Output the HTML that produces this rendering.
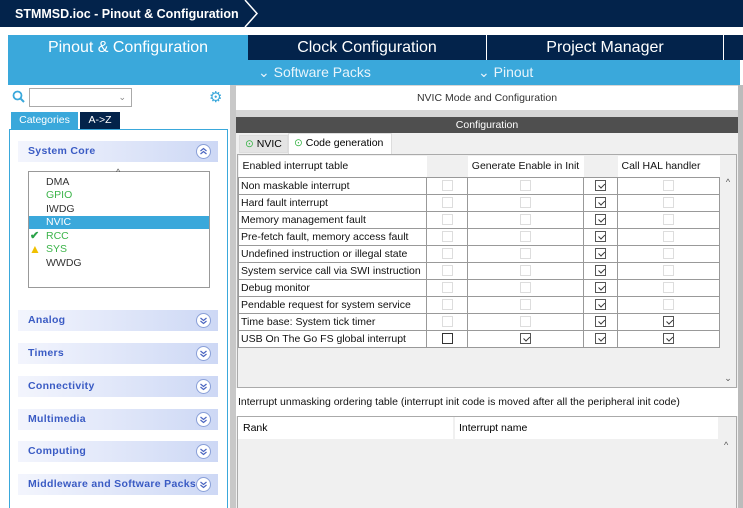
<!DOCTYPE html><html><head><style>
*{margin:0;padding:0;box-sizing:border-box}
body{width:743px;height:508px;overflow:hidden;background:#fff;font-family:"Liberation Sans",sans-serif;position:relative}
.a{position:absolute}
.top{left:0;top:0;width:743px;height:27px;background:#03234b;color:#fff;font-weight:bold;font-size:12.5px}
.tab{top:35px;height:25px;color:#fff;font-size:16px;text-align:center;line-height:25px}
.cat{left:18px;width:200px;height:21px;background:linear-gradient(90deg,#f3f5fd,#cdd8f5);color:#3a5bc4;font-weight:bold;font-size:10.5px;line-height:21px;padding-left:10px;letter-spacing:.3px}
.cat svg{position:absolute;right:7px;top:3px}
.li{left:46px;font-size:10.5px;color:#333}
table{border-collapse:collapse;font-size:10.5px;color:#111}
td{border:1px solid #999;height:17px;padding:0 2px;white-space:nowrap}
.cb{display:inline-block;width:11px;height:11px;border:1px solid #ddd;vertical-align:middle}
.ck{border-color:#555;position:relative}
.ck:after{content:"";position:absolute;left:2px;top:0px;width:5px;height:3px;border-left:1px solid #333;border-bottom:1px solid #333;transform:rotate(-45deg) translate(-1px,2px)}
.dk{border-color:#333}
td.c{text-align:center}
</style></head><body>
<svg width="0" height="0" style="position:absolute"><defs>
<g id="dn"><circle cx="7.5" cy="7.5" r="7" fill="#fff" stroke="#8aa0d8"/><path d="M4.5 5 L7.5 7.5 L10.5 5 M4.5 8 L7.5 10.5 L10.5 8" stroke="#4a65c0" stroke-width="1.2" fill="none"/></g>
<g id="up"><circle cx="7.5" cy="7.5" r="7" fill="#fff" stroke="#8aa0d8"/><path d="M4.5 7 L7.5 4.5 L10.5 7 M4.5 10 L7.5 7.5 L10.5 10" stroke="#4a65c0" stroke-width="1.2" fill="none"/></g>
</defs></svg>
<div class="a top"><span class="a" style="left:15px;top:7px">STMMSD.ioc - Pinout &amp; Configuration</span>
<svg class="a" style="left:244px;top:0" width="16" height="27"><path d="M1 0 L13 13.5 L1 27" stroke="#fff" stroke-width="1.5" fill="none"/></svg></div>
<div class="a tab" style="left:8px;width:240px;background:#3aa8db">Pinout &amp; Configuration</div>
<div class="a tab" style="left:248px;width:238px;background:#03234b">Clock Configuration</div>
<div class="a tab" style="left:487px;width:236px;background:#03234b">Project Manager</div>
<div class="a tab" style="left:724px;width:19px;background:#03234b"></div>
<div class="a" style="left:8px;top:60px;width:732px;height:25px;background:#3aa8db;color:#e8f4fb;font-size:14px;line-height:25px"><span class="a" style="left:250px">⌄ Software Packs</span><span class="a" style="left:470px">⌄ Pinout</span></div>
<!-- left -->
<svg class="a" style="left:12px;top:90px" width="14" height="14"><circle cx="5.5" cy="5.5" r="4" stroke="#3aa8db" stroke-width="1.8" fill="none"/><path d="M8.5 8.5 L12 12" stroke="#3aa8db" stroke-width="2"/></svg>
<div class="a" style="left:29px;top:88px;width:103px;height:19px;border:1px solid #aaa;font-size:9px;color:#888;text-align:right;padding-right:5px;line-height:17px">⌄</div>
<div class="a" style="left:209px;top:88px;color:#3aa8db;font-size:15px">⚙</div>
<div class="a" style="left:11px;top:112px;width:67px;height:17px;background:#3aa8db;color:#fff;font-size:10.5px;text-align:center;line-height:17px">Categories</div>
<div class="a" style="left:80px;top:112px;width:40px;height:17px;background:#03234b;color:#fff;font-size:10.5px;text-align:center;line-height:17px">A-&gt;Z</div>
<div class="a" style="left:9px;top:129px;width:219px;height:379px;border:1px solid #3aa8db;border-bottom:none"></div>
<div class="a cat" style="top:141px">System Core<svg width="15" height="15"><use href="#up"/></svg></div>
<div class="a" style="left:28px;top:171px;width:182px;height:117px;border:1px solid #999"></div>
<div class="a" style="left:116px;top:167px;font-size:9px;color:#555">^</div>
<div class="a li" style="top:176px">DMA</div>
<div class="a li" style="top:189px;color:#3cb44a">GPIO</div>
<div class="a li" style="top:203px">IWDG</div>
<div class="a" style="left:29px;top:216px;width:180px;height:13px;background:#3aa8db"></div>
<div class="a li" style="top:216px;color:#fff">NVIC</div>
<div class="a" style="left:30px;top:229px;color:#2ca34a;font-size:11px;font-weight:bold">✔</div>
<div class="a li" style="top:230px;color:#3cb44a">RCC</div>
<div class="a" style="left:29px;top:242px;color:#f0c000;font-size:12px">▲</div>
<div class="a li" style="top:243px;color:#3cb44a">SYS</div>
<div class="a li" style="top:257px">WWDG</div>
<div class="a cat" style="top:310px">Analog<svg width="15" height="15"><use href="#dn"/></svg></div>
<div class="a cat" style="top:343px">Timers<svg width="15" height="15"><use href="#dn"/></svg></div>
<div class="a cat" style="top:376px">Connectivity<svg width="15" height="15"><use href="#dn"/></svg></div>
<div class="a cat" style="top:409px">Multimedia<svg width="15" height="15"><use href="#dn"/></svg></div>
<div class="a cat" style="top:441px">Computing<svg width="15" height="15"><use href="#dn"/></svg></div>
<div class="a cat" style="top:474px">Middleware and Software Packs<svg width="15" height="15"><use href="#dn"/></svg></div>
<!-- splitter -->
<div class="a" style="left:230px;top:85px;width:6px;height:423px;background:#c8c8c8"></div>
<!-- right -->
<div class="a" style="left:236px;top:85px;width:507px;height:423px;background:#d6d6d6"></div>
<div class="a" style="left:236px;top:86px;width:502px;height:24px;background:#fff;font-size:10.5px;color:#333;text-align:center;line-height:24px">NVIC Mode and Configuration</div>
<div class="a" style="left:236px;top:117px;width:502px;height:16px;background:#4f4f4f;color:#fff;font-size:10.5px;text-align:center;line-height:16px">Configuration</div>
<div class="a" style="left:236px;top:133px;width:502px;height:375px;background:#f0f0f0"></div>
<div class="a" style="left:239px;top:135px;width:49px;height:18px;background:#e4e4e4;border:1px solid #ddd;font-size:10.5px;line-height:16px;padding-left:5px"><span style="color:#3cb44a">⊙</span> NVIC</div>
<div class="a" style="left:288px;top:133px;width:104px;height:21px;background:#fff;border:1px solid #ddd;border-bottom:none;font-size:10.5px;line-height:18px;padding-left:5px"><span style="color:#3cb44a">⊙</span> Code generation</div>
<div class="a" style="left:237px;top:154px;width:500px;height:234px;border:1px solid #aaa;background:#f0f0f0"></div>
<div class="a" style="left:720px;top:155px;width:16px;height:232px;background:#f0f0f0;font-size:9px;color:#555;text-align:center"><div style="margin-top:22px">^</div><div style="margin-top:186px">⌄</div></div>
<table class="a" style="left:238px;top:156px;width:482px">
<tr style="height:21px;background:#fff"><td style="width:188px;border:none;padding-left:4px">Enabled interrupt table</td><td style="width:41px;border:none;background:#f0f0f0"></td><td style="width:116px;border:none" class="c">Generate Enable in Init</td><td style="width:34px;border:none;background:#f0f0f0"></td><td style="border:none;padding-left:4px">Call HAL handler</td></tr>
<tr style="background:#fff"><td>Non maskable interrupt</td><td class="c"><span class="cb"></span></td><td class="c"><span class="cb"></span></td><td class="c"><span class="cb ck"></span></td><td class="c"><span class="cb"></span></td></tr>
<tr style="background:#fff"><td>Hard fault interrupt</td><td class="c"><span class="cb"></span></td><td class="c"><span class="cb"></span></td><td class="c"><span class="cb ck"></span></td><td class="c"><span class="cb"></span></td></tr>
<tr style="background:#fff"><td>Memory management fault</td><td class="c"><span class="cb"></span></td><td class="c"><span class="cb"></span></td><td class="c"><span class="cb ck"></span></td><td class="c"><span class="cb"></span></td></tr>
<tr style="background:#fff"><td>Pre-fetch fault, memory access fault</td><td class="c"><span class="cb"></span></td><td class="c"><span class="cb"></span></td><td class="c"><span class="cb ck"></span></td><td class="c"><span class="cb"></span></td></tr>
<tr style="background:#fff"><td>Undefined instruction or illegal state</td><td class="c"><span class="cb"></span></td><td class="c"><span class="cb"></span></td><td class="c"><span class="cb ck"></span></td><td class="c"><span class="cb"></span></td></tr>
<tr style="background:#fff"><td>System service call via SWI instruction</td><td class="c"><span class="cb"></span></td><td class="c"><span class="cb"></span></td><td class="c"><span class="cb ck"></span></td><td class="c"><span class="cb"></span></td></tr>
<tr style="background:#fff"><td>Debug monitor</td><td class="c"><span class="cb"></span></td><td class="c"><span class="cb"></span></td><td class="c"><span class="cb ck"></span></td><td class="c"><span class="cb"></span></td></tr>
<tr style="background:#fff"><td>Pendable request for system service</td><td class="c"><span class="cb"></span></td><td class="c"><span class="cb"></span></td><td class="c"><span class="cb ck"></span></td><td class="c"><span class="cb"></span></td></tr>
<tr style="background:#fff"><td>Time base: System tick timer</td><td class="c"><span class="cb"></span></td><td class="c"><span class="cb"></span></td><td class="c"><span class="cb ck"></span></td><td class="c"><span class="cb ck"></span></td></tr>
<tr style="background:#fff"><td>USB On The Go FS global interrupt</td><td class="c"><span class="cb dk"></span></td><td class="c"><span class="cb ck"></span></td><td class="c"><span class="cb ck"></span></td><td class="c"><span class="cb ck"></span></td></tr>
</table>
<div class="a" style="left:236px;top:388px;width:502px;height:28px;background:#fff;font-size:10.5px;line-height:28px;padding-left:2px;color:#111">Interrupt unmasking ordering table (interrupt init code is moved after all the peripheral init code)</div>
<div class="a" style="left:237px;top:416px;width:500px;height:92px;border:1px solid #aaa;border-bottom:none;background:#f0f0f0"></div>
<div class="a" style="left:238px;top:417px;width:215px;height:22px;background:#fff;font-size:10.5px;line-height:22px;padding-left:5px">Rank</div>
<div class="a" style="left:455px;top:417px;width:263px;height:22px;background:#fff;font-size:10.5px;line-height:22px;padding-left:4px">Interrupt name</div>
<div class="a" style="left:724px;top:440px;font-size:9px;color:#555">^</div>
<div class="a" style="left:738px;top:85px;width:5px;height:423px;background:#bbb"></div>
</body></html>
